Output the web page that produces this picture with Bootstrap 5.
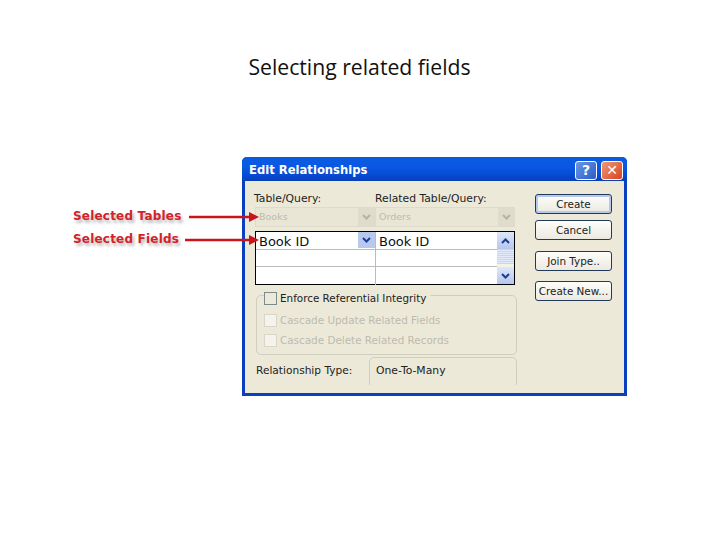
<!DOCTYPE html>
<html lang="en">
<head>
<meta charset="utf-8">
<title>Selecting related fields</title>
<link rel="stylesheet" href="https://cdn.jsdelivr.net/npm/bootstrap@5.3.0/dist/css/bootstrap.min.css">
<style>
html,body{margin:0;background:#fff;}
.slide{width:720px;height:540px;overflow:hidden;position:relative;font-family:"DejaVu Sans",sans-serif;}
.slide-title{font-family:"Open Sans",sans-serif;font-size:21.2px;line-height:28px;color:#111;padding-top:53px;height:157px;text-align:center;margin:0 0 0 -1px;font-weight:400;}
.dlg{width:385px;height:239px;margin-left:242px;background:#ece9d8;border:solid #0a3fc0;border-width:0 3px 3px 3px;border-radius:5px 5px 0 0;position:relative;font-size:10.8px;color:#222;}
.dlg-bar{height:24px;margin:0 -3px;background:linear-gradient(#0a5be0,#0a58e4 40%,#0547cf 85%,#0a3fb0);border-radius:5px 5px 0 0;color:#fff;font-weight:700;font-size:11.6px;padding:3px 0 0 7px;}
.cap-btn{width:22px;height:19px;border:1px solid #fff;border-radius:3px;color:#fff;font-size:14px;line-height:17px;text-align:center;font-weight:700;}
.cap-help{background:linear-gradient(135deg,#6a97e8,#2a5cc8);}
.cap-close{background:linear-gradient(135deg,#ee9a78,#d8431c);}
.dlg-main{padding:0 0 0 7px;}
.dlg-left{width:263px;}
.lbl-row{height:26px;padding-top:11px;line-height:14px;}
.lbl-a{width:123px;padding-left:2px;}
.combo-row{height:20px;margin-left:3px;width:260px;}
.combo{height:20px;color:#bdbaae;background:#e9e6d6;border:1px solid #dedbcb;padding-left:3px;line-height:18px;font-size:9.5px;}
.combo-a{width:120px;}
.combo-b{width:140px;}
.combo-arrow{width:16px;height:18px;background:#dfdccc;display:flex;align-items:center;justify-content:center;}
.grid-box{width:260px;height:54px;margin:4px 0 0 3px;border:1.5px solid #000;background:#fff;}
.grid-cols{flex:1 1 auto;min-width:0;}
.grid-row{height:17.5px;border-bottom:1px solid #bbb;font-size:13px;color:#111;line-height:20px;}
.grid-row:last-child{border-bottom:0;}
.cell-a{width:120px;border-right:1px solid #bbb;padding-left:3px;}
.cell-b{flex:1 1 auto;padding-left:3px;}
.drop{width:17px;height:16px;background:#b9c9ee;display:flex;align-items:center;justify-content:center;}
.sbar{width:17px;background:#f4f2e4;}
.sbtn{height:17px;background:linear-gradient(#dfe7fa,#b5c6ee);display:flex;align-items:center;justify-content:center;}
.sthumb{height:15px;background:repeating-linear-gradient(#c8d6f5 0 1px,#e3eafa 1px 2px);margin-bottom:3px;}
.fs{width:261px;height:60px;margin:10px 0 0 4px;border:1px solid #d0cebf;border-radius:5px;position:relative;padding:14px 0 0 7px;font-size:10.4px;}
.fs-top{position:absolute;left:7px;top:-5px;background:#ece9d8;padding-right:4px;line-height:14px;color:#222;gap:3px;}
.cb{width:13px;height:13px;border:1px solid #7f8a8f;display:inline-block;flex:none;}
.cb-off{background:#f5f4ec;border-color:#d8d6c8;}
.fs-line{color:#bdbbb0;line-height:14px;height:20px;gap:3px;}
.rel-row{margin:2px 0 0 4px;width:261px;height:28px;}
.rel-lbl{width:113px;line-height:26px;font-size:10.6px;}
.rel-box{width:148px;height:28px;border:1px solid #d0cebf;border-bottom:0;border-radius:5px 5px 0 0;padding-left:6px;line-height:25px;}
.dlg-right{width:77px;margin-left:20px;padding-top:13px;}
.xp-btn{display:block;width:77px;height:20px;padding:0;background:linear-gradient(#fdfdfa,#ece9e0);border:1px solid #223a58;border-radius:3px;font-size:10.4px;line-height:18px;color:#222;text-align:center;}
.xp-def{box-shadow:inset 0 0 0 2px #b5c9ee;}
.m6{margin-top:6px;}.m11{margin-top:11px;}.m10{margin-top:10px;}
.note{position:absolute;left:73px;color:#d3222a;font-weight:700;font-size:12px;line-height:14px;text-shadow:2px 3px 3px #bbb;letter-spacing:.2px;font-family:"DejaVu Sans",sans-serif;}
.note-a{top:209px;}
.note-b{top:232px;}
.arrow{position:absolute;overflow:visible;}
</style>
</head>
<body>
<div class="slide">
  <h1 class="slide-title">Selecting related fields</h1>
  <div class="dlg">
    <div class="dlg-bar d-flex align-items-center justify-content-between">
      <span>Edit Relationships</span>
      <span class="d-flex gap-1 pe-1">
        <span class="cap-btn cap-help">?</span>
        <span class="cap-btn cap-close">&#10005;</span>
      </span>
    </div>
    <div class="dlg-main d-flex">
      <div class="dlg-left">
        <div class="lbl-row d-flex"><span class="lbl-a">Table/Query:</span><span>Related Table/Query:</span></div>
        <div class="combo-row d-flex">
          <div class="combo combo-a d-flex justify-content-between"><span>Books</span><span class="combo-arrow"><svg width="9" height="6" viewBox="0 0 9 6"><path d="M1 1l3.5 3.5L8 1" fill="none" stroke="#b5b2a6" stroke-width="2"/></svg></span></div>
          <div class="combo combo-b d-flex justify-content-between"><span>Orders</span><span class="combo-arrow"><svg width="9" height="6" viewBox="0 0 9 6"><path d="M1 1l3.5 3.5L8 1" fill="none" stroke="#b5b2a6" stroke-width="2"/></svg></span></div>
        </div>
        <div class="grid-box d-flex">
          <div class="grid-cols">
            <div class="grid-row d-flex">
              <div class="cell-a d-flex justify-content-between"><span>Book ID</span><span class="drop"><svg width="9" height="6" viewBox="0 0 9 6"><path d="M1 1l3.5 3.5L8 1" fill="none" stroke="#1c3f94" stroke-width="2"/></svg></span></div>
              <div class="cell-b">Book ID</div>
            </div>
            <div class="grid-row d-flex"><div class="cell-a"></div><div class="cell-b"></div></div>
            <div class="grid-row d-flex"><div class="cell-a"></div><div class="cell-b"></div></div>
          </div>
          <div class="sbar d-flex flex-column">
            <div class="sbtn"><svg width="9" height="6" viewBox="0 0 9 6"><path d="M1 5l3.5-3.5L8 5" fill="none" stroke="#1c3f94" stroke-width="2"/></svg></div>
            <div class="sthumb"></div>
            <div class="sbtn"><svg width="9" height="6" viewBox="0 0 9 6"><path d="M1 1l3.5 3.5L8 1" fill="none" stroke="#1c3f94" stroke-width="2"/></svg></div>
          </div>
        </div>
        <div class="fs">
          <div class="fs-top d-flex align-items-center"><span class="cb"></span><span>Enforce Referential Integrity</span></div>
          <div class="d-flex align-items-center fs-line"><span class="cb cb-off"></span><span>Cascade Update Related Fields</span></div>
          <div class="d-flex align-items-center fs-line"><span class="cb cb-off"></span><span>Cascade Delete Related Records</span></div>
        </div>
        <div class="rel-row d-flex"><span class="rel-lbl">Relationship Type:</span><span class="rel-box">One-To-Many</span></div>
      </div>
      <div class="dlg-right">
        <button class="xp-btn xp-def" type="button">Create</button>
        <button class="xp-btn m6" type="button">Cancel</button>
        <button class="xp-btn m11" type="button">Join Type..</button>
        <button class="xp-btn m10" type="button">Create New...</button>
      </div>
    </div>
  </div>
  <div class="note note-a">Selected Tables</div>
  <div class="note note-b">Selected Fields</div>
  <svg class="arrow" style="left:0;top:0" width="720" height="540" viewBox="0 0 720 540">
    <path d="M189 217H250" stroke="#c8141c" stroke-width="2.5"/><path d="M249 212l10 5-10 5z" fill="#c8141c"/>
    <path d="M185 240H250" stroke="#c8141c" stroke-width="2.5"/><path d="M249 235l10 5-10 5z" fill="#c8141c"/>
  </svg>
</div>
<script src="https://cdn.jsdelivr.net/npm/bootstrap@5.3.0/dist/js/bootstrap.bundle.min.js"></script>
</body>
</html>
